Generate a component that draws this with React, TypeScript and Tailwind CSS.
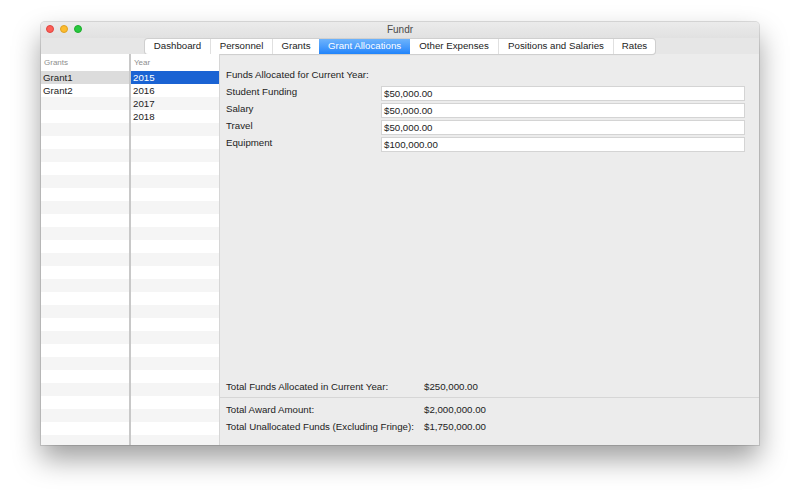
import React from "react";

const TABS = [
  { label: "Dashboard", w: "w-[65px]" },
  { label: "Personnel", w: "w-[62px]" },
  { label: "Grants", w: "w-[47px]" },
  { label: "Grant Allocations", w: "w-[91px]", active: true },
  { label: "Other Expenses", w: "w-[88px]" },
  { label: "Positions and Salaries", w: "w-[115px]" },
  { label: "Rates", w: "w-[42px]" },
];

const GRANTS = ["Grant1", "Grant2"];
const YEARS = ["2015", "2016", "2017", "2018"];

const FUNDS = [
  { label: "Student Funding", value: "$50,000.00" },
  { label: "Salary", value: "$50,000.00" },
  { label: "Travel", value: "$50,000.00" },
  { label: "Equipment", value: "$100,000.00" },
];

const ROWS = Array.from({ length: 29 }, (_, i) => i);

function ListColumn({
  title,
  items,
  selectedClass,
  className,
}: {
  title: string;
  items: string[];
  selectedClass: string;
  className: string;
}) {
  return (
    <div className={`shrink-0 bg-white flex flex-col overflow-hidden ${className}`}>
      <div className="h-[17px] shrink-0 pl-[3px] flex items-center text-[8px] text-[#8e8e8e]">
        {title}
      </div>
      {ROWS.map((i) => {
        const bg = i === 0 ? selectedClass : i % 2 === 0 ? "bg-[#f5f5f5]" : "bg-white";
        return (
          <div key={i} className={`h-[13px] shrink-0 pl-[2px] flex items-center leading-none ${bg}`}>
            {items[i]}
          </div>
        );
      })}
    </div>
  );
}

export default function App() {
  return (
    <div
      className="w-[800px] h-[500px] bg-white pt-[22px] pl-[41px] text-[9.7px] text-[#222]"
      style={{ fontFamily: '"Liberation Sans", Arial, sans-serif' }}
    >
      <div className="w-[718px] h-[423px] bg-[#ececec] rounded-t-[4px] flex flex-col shadow-[0_14px_28px_rgba(0,0,0,0.38),0_0_0_1px_rgba(0,0,0,0.12)]">
        {/* title bar */}
        <div className="h-[16px] shrink-0 relative flex items-center pb-[2px] rounded-t-[4px] bg-gradient-to-b from-[#ebebeb] to-[#e1e1e1]">
          <div className="flex gap-[6px] pl-[5px]">
            <span className="w-[8px] h-[8px] rounded-full bg-[#fc5f57] border border-[#e0443e]" />
            <span className="w-[8px] h-[8px] rounded-full bg-[#fdbc2e] border border-[#dea123]" />
            <span className="w-[8px] h-[8px] rounded-full bg-[#28c840] border border-[#1dad2b]" />
          </div>
          <div className="absolute inset-0 flex items-center justify-center text-[10px] text-[#4a4a4a] pb-[1px]">
            Fundr
          </div>
        </div>

        {/* tab bar */}
        <div className="h-[16px] shrink-0 flex justify-center pt-[1px] bg-[#e6e6e6]">
          <div className="h-[15px] flex bg-white rounded-[3px] shadow-[0_0_0_1px_#cfcfcf,0_1px_1px_rgba(0,0,0,0.12)] overflow-hidden">
            {TABS.map((t, i) => (
              <div
                key={t.label}
                className={`${t.w} h-full flex items-center justify-center ${
                  t.active
                    ? "bg-gradient-to-b from-[#6db3fb] to-[#1f84fb] text-white"
                    : i > 0 && !TABS[i - 1].active
                    ? "border-l border-[#e0e0e0]"
                    : ""
                }`}
              >
                {t.label}
              </div>
            ))}
          </div>
        </div>

        {/* content */}
        <div className="flex-1 flex min-h-0">
          <ListColumn
            title="Grants"
            items={GRANTS}
            selectedClass="bg-[#dcdcdc]"
            className="w-[90px] border-r-2 border-[#c8c8c8]"
          />
          <ListColumn
            title="Year"
            items={YEARS}
            selectedClass="bg-[#1a63d3] text-white"
            className="w-[89px] border-r border-[#d6d6d6]"
          />

          <div className="flex-1 flex flex-col">
            <div className="flex-1 flex flex-col pt-[15px] pl-[6px] pr-[14px]">
              <div className="h-[13px] flex items-center">Funds Allocated for Current Year:</div>
              <div className="flex flex-col gap-[2px] mt-[4px]">
                {FUNDS.map((f) => (
                  <div key={f.label} className="flex h-[15px]">
                    <div className="w-[155px] shrink-0 leading-none pt-[1px]">{f.label}</div>
                    <div className="flex-1 bg-white border border-[#d4d4d4] flex items-center pl-[2px] leading-none">
                      {f.value}
                    </div>
                  </div>
                ))}
              </div>
              <div className="flex-1" />
              <div className="flex h-[13px] items-center mb-[3px]">
                <div className="w-[198px]">Total Funds Allocated in Current Year:</div>
                <div>$250,000.00</div>
              </div>
            </div>
            <div className="border-t border-[#d6d6d6] pl-[6px] pt-[6px] pb-[11px] flex flex-col gap-[4px]">
              <div className="flex h-[13px] items-center">
                <div className="w-[198px]">Total Award Amount:</div>
                <div>$2,000,000.00</div>
              </div>
              <div className="flex h-[13px] items-center">
                <div className="w-[198px]">Total Unallocated Funds (Excluding Fringe):</div>
                <div>$1,750,000.00</div>
              </div>
            </div>
          </div>
        </div>
      </div>
    </div>
  );
}
